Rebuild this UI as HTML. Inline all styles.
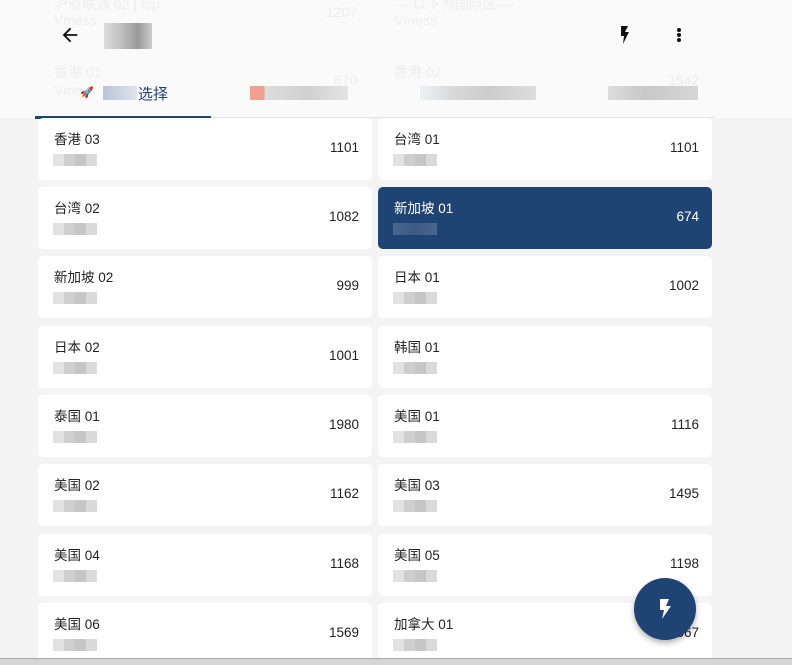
<!DOCTYPE html>
<html><head><meta charset="utf-8"><style>
*{margin:0;padding:0;box-sizing:border-box}
body{width:792px;height:665px;overflow:hidden;background:#f4f4f4;font-family:"Liberation Sans","Noto Sans CJK SC",sans-serif;position:relative}
.c{position:absolute;width:334px;height:62px;background:#fff;border-radius:5px}
.c .t{position:absolute;left:16px;top:10px;font-size:13.5px;color:#222}
.c .n{position:absolute;right:13px;top:22px;font-size:13.5px;color:#222}
.c .b{position:absolute;left:15px;top:36px;width:44px;height:12px;background:linear-gradient(90deg,#e2e2e2 0 25%,#cfcfcf 25% 50%,#c6c6c6 50% 75%,#dadada 75%)}
.c.s{background:#1f4373}
.c.s .t,.c.s .n{color:#fff}
.c.s .b{background:linear-gradient(90deg,#4a6690,#3b5a86,#4a6690)}
.hdr{position:absolute;left:0;top:0;width:792px;height:118px;background:#fafafa}
.g{position:absolute;color:#eeeeee;font-size:14px}
.px{position:absolute;height:14px}
</style></head><body>
<div class="hdr">
<div class="g" style="left:54px;top:-6px">沪商联通 02 | tcp</div>
<div class="g" style="left:326px;top:4px">1207</div>
<div class="g" style="left:54px;top:12px">Vmess</div>
<div class="g" style="left:394px;top:-6px">----以下为国际区----</div>
<div class="g" style="left:394px;top:12px">Vmess</div>
<div class="g" style="left:54px;top:62px">香港 01</div>
<div class="g" style="left:334px;top:72px">870</div>
<div class="g" style="left:54px;top:82px">Vme</div>
<div class="g" style="left:394px;top:62px">香港 02</div>
<div class="g" style="left:668px;top:72px">1542</div>
<svg style="position:absolute;left:59px;top:24px" width="22" height="22" viewBox="0 0 24 24"><path d="M20 11H7.8l5.6-5.6L12 4l-8 8 8 8 1.4-1.4L7.8 13H20z" fill="#111"/></svg>
<div class="px" style="left:104px;top:23px;width:48px;height:26px;background:linear-gradient(90deg,#ddd,#bbb 40%,#999 70%,#ccc)"></div>
<svg style="position:absolute;left:616px;top:25px" width="18" height="20" viewBox="0 0 18 20"><path d="M5 1h7l-3 6h4L7 19l1-8H5z" fill="#111"/></svg>
<div style="position:absolute;left:677px;top:28px;width:4px;height:4px;border-radius:2px;background:#111;box-shadow:0 5px 0 #111,0 10px 0 #111"></div>
<div style="position:absolute;left:80px;top:86px;font-size:11px">🚀</div>
<div class="px" style="left:103px;top:86px;width:34px;background:linear-gradient(90deg,#b8c4d8,#dfe4ec)"></div>
<div style="position:absolute;left:138px;top:83px;font-size:15px;color:#1f4373">选择</div>
<div class="px" style="left:250px;top:86px;width:98px;background:linear-gradient(90deg,#f0a090 0 15%,#ddd 15%,#d0d0d0 60%,#e4e4e4)"></div>
<div class="px" style="left:420px;top:86px;width:116px;background:linear-gradient(90deg,#eef0f4,#d8d8d8 30%,#ccc 60%,#ddd)"></div>
<div class="px" style="left:608px;top:86px;width:90px;background:linear-gradient(90deg,#ddd,#c8c8c8 40%,#d6d6d6)"></div>
<div style="position:absolute;left:35px;top:116px;width:176px;height:3px;background:#1f4373"></div>
<div style="position:absolute;left:211px;top:117px;width:504px;height:1px;background:#e4e4e4"></div>
</div>

<div class="c" style="left:38px;top:118px"><div class="t">香港 03</div><div class="n">1101</div><div class="b"></div></div>
<div class="c" style="left:378px;top:118px"><div class="t">台湾 01</div><div class="n">1101</div><div class="b"></div></div>
<div class="c" style="left:38px;top:187px"><div class="t">台湾 02</div><div class="n">1082</div><div class="b"></div></div>
<div class="c s" style="left:378px;top:187px"><div class="t">新加坡 01</div><div class="n">674</div><div class="b"></div></div>
<div class="c" style="left:38px;top:256px"><div class="t">新加坡 02</div><div class="n">999</div><div class="b"></div></div>
<div class="c" style="left:378px;top:256px"><div class="t">日本 01</div><div class="n">1002</div><div class="b"></div></div>
<div class="c" style="left:38px;top:326px"><div class="t">日本 02</div><div class="n">1001</div><div class="b"></div></div>
<div class="c" style="left:378px;top:326px"><div class="t">韩国 01</div><div class="b"></div></div>
<div class="c" style="left:38px;top:395px"><div class="t">泰国 01</div><div class="n">1980</div><div class="b"></div></div>
<div class="c" style="left:378px;top:395px"><div class="t">美国 01</div><div class="n">1116</div><div class="b"></div></div>
<div class="c" style="left:38px;top:464px"><div class="t">美国 02</div><div class="n">1162</div><div class="b"></div></div>
<div class="c" style="left:378px;top:464px"><div class="t">美国 03</div><div class="n">1495</div><div class="b"></div></div>
<div class="c" style="left:38px;top:534px"><div class="t">美国 04</div><div class="n">1168</div><div class="b"></div></div>
<div class="c" style="left:378px;top:534px"><div class="t">美国 05</div><div class="n">1198</div><div class="b"></div></div>
<div class="c" style="left:38px;top:603px"><div class="t">美国 06</div><div class="n">1569</div><div class="b"></div></div>
<div class="c" style="left:378px;top:603px"><div class="t">加拿大 01</div><div class="n">1567</div><div class="b"></div></div>

<div style="position:absolute;left:634px;top:578px;width:62px;height:62px;border-radius:50%;background:#1f4373;box-shadow:0 3px 6px rgba(0,0,0,.3)"></div>
<svg style="position:absolute;left:656px;top:598px" width="18" height="22" viewBox="0 0 18 22"><path d="M4 1h9l-3 7h5L6 21l2-9H4z" fill="#fff"/></svg>
<div style="position:absolute;left:0;top:658px;width:792px;height:7px;background:#d6d6d6;border-top:1px solid #aaa"></div>
</body></html>
